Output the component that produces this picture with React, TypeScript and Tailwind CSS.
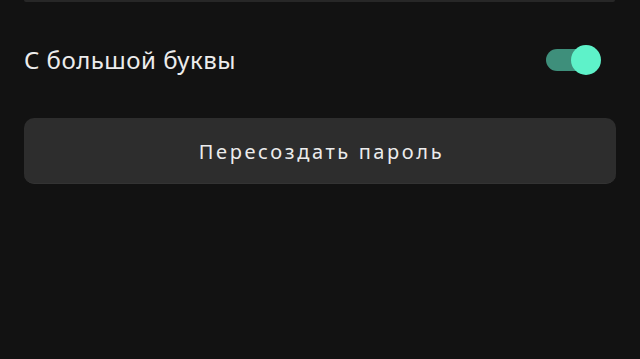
export default function App() {
  return (
    <div
      className="w-[640px] h-[359px] bg-[#121212] overflow-hidden px-6"
      style={{ fontFamily: '"Noto Sans", "Open Sans", sans-serif' }}
    >
      {/* bottom edge of the block above */}
      <div className="h-[2px] bg-[#272727] rounded-b-[2px] mr-[1px]" />

      {/* Capital letter switch */}
      <div className="flex items-center justify-between mt-[41px] h-[34px]">
        <span className="text-[24px] leading-none tracking-[0.5px] text-[#ececec]">С большой буквы</span>
        <div className="relative w-[55px] h-[30px] flex items-center mr-[15px]">
          <div className="w-[45px] h-[22px] rounded-full bg-[#3e8f7b]" />
          <div className="absolute right-0 top-0 w-[30px] h-[30px] rounded-full bg-[#5ef2c9]" />
        </div>
      </div>

      {/* Regenerate button */}
      <button className="mt-[41px] w-full h-[66px] rounded-[10px] bg-[#2d2d2d] border-b border-[#333] pl-[3px] pt-[2px] text-[20px] tracking-[2.6px] text-[#ececec]">
        Пересоздать пароль
      </button>
    </div>
  )
}
